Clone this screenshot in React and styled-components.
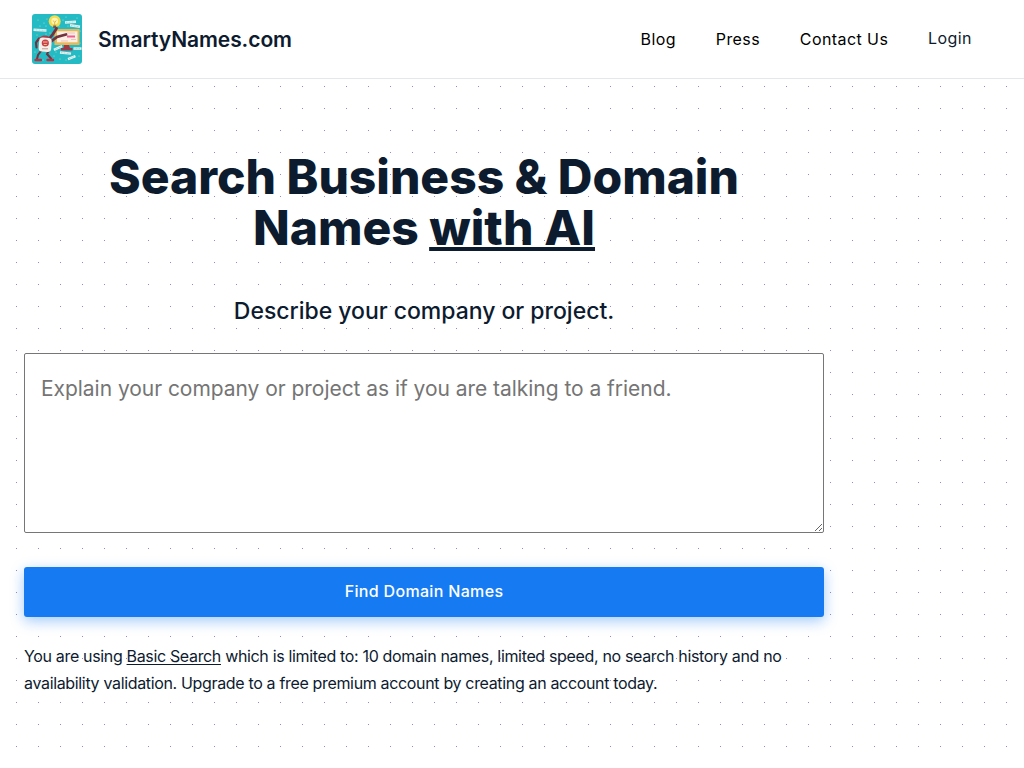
import styled, { createGlobalStyle } from 'styled-components';

const links = ['Blog', 'Press', 'Contact Us'];

// x, y, rotation and width of the paper slips around the robot
const slips = [
  [8, 16, 3, 13],
  [38.5, 8, -4, 11],
  [43, 12, 8, 10],
  [26, 34, -24, 9],
  [33.5, 39, 6, 11],
  [45.5, 34.5, 0, 8],
  [39.7, 43.5, -22, 8],
];

const confetti = [
  [6, 6], [12, 9], [15, 5], [31, 6], [36, 12], [45, 4], [5, 21], [8, 12],
  [18, 19], [14, 20], [3, 38], [22, 42], [28, 45], [27, 12], [48, 29],
  [48, 17], [34, 46], [14, 12], [47, 42], [11, 46], [24, 38], [34, 3],
];

const Robot = () => (
  <Logo viewBox="0 0 50 50" aria-hidden="true">
    <rect width="50" height="50" rx="3" fill="#25bbc4" />
    {confetti.map(([x, y], i) => (
      <circle
        key={`${x}-${y}`}
        cx={x}
        cy={y}
        r="0.5"
        fill={i % 2 ? '#b8ebe6' : '#e8d98a'}
      />
    ))}
    {slips.map(([x, y, angle, width]) => (
      <g key={`${x}-${y}`} transform={`translate(${x} ${y}) rotate(${angle})`}>
        <rect x={-width / 2} y="-1.2" width={width} height="2.5" fill="#e6f5f2" />
        <path
          d={`M${1 - width / 2} .1h${width - 2}`}
          stroke="#93bcbc"
          strokeWidth=".6"
          strokeDasharray="1 .5"
        />
      </g>
    ))}
    <circle cx="22.7" cy="7.2" r="6" fill="#f3dc4f" />
    <circle cx="22.7" cy="7" r="3.3" fill="#fff6b4" />
    <path d="M21.2 6.5l1.5 2 1.5-2M22.7 8.5v3" stroke="#d5a92a" strokeWidth=".8" fill="none" />
    <path d="M21.2 11.5h3v2.5h-3z" fill="#6b5960" />
    <path d="M22.5 15h25v16h-25z" fill="#e5b85b" />
    <path d="M25 17.3h20.5v11H25z" fill="#fbeee2" />
    <path d="M35 19h8M39 25.5h5M29 27h7" stroke="#efb9ad" strokeWidth=".8" />
    <path d="M35 22.5h8" stroke="#f05b94" strokeWidth="2" />
    <path d="M32 31h5l1 3h2.5v2.5H29V34h2.5z" fill="#9c3a48" />
    <g fill="none" stroke="#70333f" strokeLinecap="round">
      <path d="M17 25l4-5 3.5-5.5M19 27.5l6-4.5 9-2.5" strokeWidth="2.8" />
      <path d="M7 24.5l-3 4 .5 5" strokeWidth="2.2" />
      <path d="M9 37l-3 4-1 4M17 36.5l-2 3.5 4 4.5" strokeWidth="2" />
    </g>
    <path d="M3.5 46h5.5M15.5 46h5.5" stroke="#b73344" strokeWidth="2.4" strokeLinecap="round" />
    <path d="M6 26q3-6 10-4l4 4z" fill="#a3404b" />
    <rect x="7" y="23.8" width="12.5" height="14" rx="3.5" fill="#f6efe8" transform="rotate(5 13 30)" />
    <circle cx="13.3" cy="29" r="3.6" fill="#c83d55" />
    <path d="M11 28h4.5M11.8 30.5h3" stroke="#efcd65" strokeWidth="1.2" />
    <path d="M10 34.8h6" stroke="#a77075" strokeWidth=".7" />
  </Logo>
);

const App = () => (
  <>
    <GlobalStyle />
    <Header>
      <Brand href="#">
        <Robot />
        SmartyNames.com
      </Brand>
      <Nav>
        {links.map((label) => (
          <NavLink key={label} href="#">
            {label}
          </NavLink>
        ))}
        <Login href="#">Login</Login>
      </Nav>
    </Header>
    <Main>
      <Form onSubmit={(e) => e.preventDefault()}>
        <Title>
          Search Business &amp; Domain Names <u>with AI</u>
        </Title>
        <Label htmlFor="description">Describe your company or project.</Label>
        <Description
          id="description"
          placeholder="Explain your company or project as if you are talking to a friend."
        />
        <Button type="submit">Find Domain Names</Button>
        <Note>
          You are using <u>Basic Search</u> which is limited to: 10 domain
          names, limited speed, no search history and no availability
          validation. Upgrade to a free premium account by creating an account
          today.
        </Note>
      </Form>
    </Main>
  </>
);

const GlobalStyle = createGlobalStyle`
  * {
    box-sizing: border-box;
  }
  body {
    margin: 0;
    overflow: hidden;
    color: #0d1b2f;
    background: #fff;
    font-family: Inter, sans-serif;
    font-size: 16px;
  }
`;

const Header = styled.header`
  display: flex;
  align-items: center;
  justify-content: space-between;
  height: 79px;
  padding: 0 52px 0 32px;
  border-bottom: 1px solid #e5e7eb;
`;

const Brand = styled.a`
  display: flex;
  align-items: center;
  gap: 16px;
  color: inherit;
  font-size: 21px;
  font-weight: 600;
  letter-spacing: -0.08px;
  text-decoration: none;
`;

const Logo = styled.svg`
  width: 50px;
  height: 50px;
`;

const Nav = styled.nav`
  display: flex;
  gap: 39.8px;
  line-height: 24px;
`;

const NavLink = styled.a`
  color: #000;
  letter-spacing: 0.42px;
  text-decoration: none;
`;

const Login = styled(NavLink)`
  margin-top: -1px;
  color: #0d1b2f;
`;

const Main = styled.main`
  height: 689px;
  padding: 72px 24px 0;
  background-image: radial-gradient(
    circle at 11.5px 11.5px,
    #9488d0 0.6px,
    transparent 0.6px
  );
  background-position: 5px 18px;
  background-size: 22px 22px;
`;

const Form = styled.form`
  display: flex;
  flex-direction: column;
  width: 800px;
`;

const Title = styled.h1`
  margin: 0;
  padding: 0 60px;
  font-size: 48px;
  font-weight: 800;
  line-height: 51px;
  letter-spacing: -0.03px;
  text-align: center;

  u {
    letter-spacing: 0.1px;
    text-decoration-thickness: 4px;
    text-underline-offset: 2px;
  }
`;

const Label = styled.label`
  margin-top: 41px;
  font-size: 23px;
  font-weight: 500;
  line-height: 34px;
  letter-spacing: -0.02px;
  text-align: center;
`;

const Description = styled.textarea`
  height: 180px;
  margin: 25px 0 0;
  padding: 17px 16px 16px;
  border: 1px solid #767676;
  border-radius: 2px;
  background: #fff;
  font-family: inherit;
  font-size: 21px;
  line-height: 36px;
  letter-spacing: -0.04px;
  resize: vertical;

  &::placeholder {
    color: #757575;
  }
`;

const Button = styled.button`
  height: 50px;
  margin-top: 33.5px;
  padding: 0 0 1px;
  border: 0;
  border-radius: 3px;
  color: #fff;
  background: #167bf3;
  box-shadow: 0 4px 14px rgba(22, 123, 243, 0.4);
  font-family: inherit;
  font-size: 16px;
  font-weight: 500;
  letter-spacing: 0.33px;
`;

const Note = styled.p`
  margin: 26.5px 0 0;
  font-size: 16px;
  line-height: 27px;
  letter-spacing: -0.34px;

  u {
    text-underline-offset: 2px;
  }
`;

export default App;
